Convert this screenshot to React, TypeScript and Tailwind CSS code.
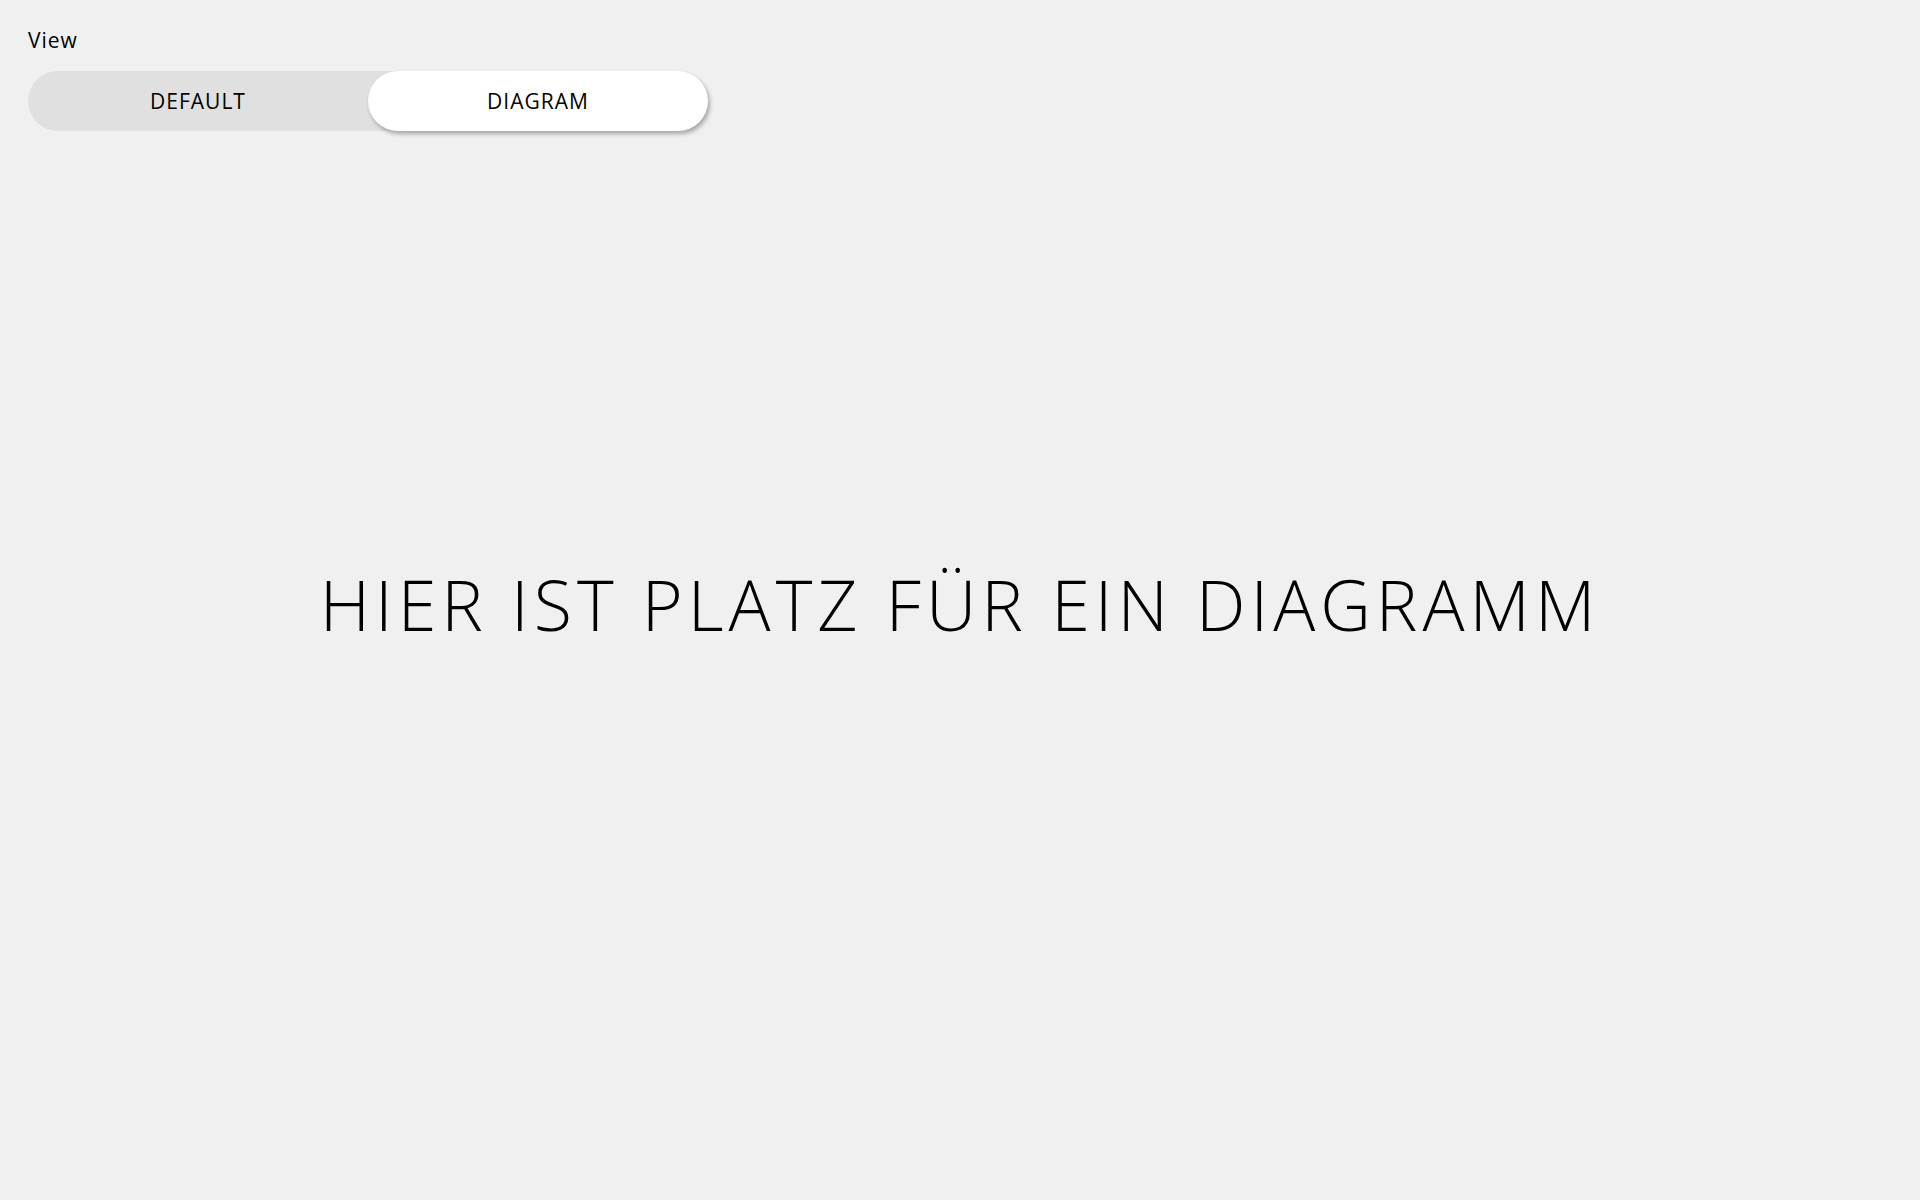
import { useState } from "react"

const font = { fontFamily: '"Open Sans", "Noto Sans", sans-serif' }

const App = () => {
  const [view, setView] = useState<"default" | "diagram">("diagram")

  return (
    <div className="h-screen flex flex-col bg-[#f0f0f0] text-black" style={font}>

      <div className="px-[28px] pt-[26px]">
        <p className="text-[21px] leading-[28px] tracking-[1px]">View</p>

        <div className="mt-[17px] flex w-[680px] h-[60px] rounded-full bg-[#e0e0e0]">
          <button
            onClick={() => setView("default")}
            className={`flex-1 pt-[2px] rounded-full text-[21px] tracking-[1px] uppercase ${
              view === "default"
                ? "bg-white shadow-[2px_3px_4px_rgba(0,0,0,0.3)]"
                : ""
            }`}
          >
            Default
          </button>
          <button
            onClick={() => setView("diagram")}
            className={`flex-1 pt-[2px] rounded-full text-[21px] tracking-[1px] uppercase ${
              view === "diagram"
                ? "bg-white shadow-[2px_3px_4px_rgba(0,0,0,0.3)]"
                : ""
            }`}
          >
            Diagram
          </button>
        </div>
      </div>

      <div className="flex-1 flex items-center justify-center pb-[123px]">
        <h1 className="text-[70px] font-light tracking-[5px] leading-none">
          HIER IST PLATZ FÜR EIN DIAGRAMM
        </h1>
      </div>

    </div>
  )
}

export default App
